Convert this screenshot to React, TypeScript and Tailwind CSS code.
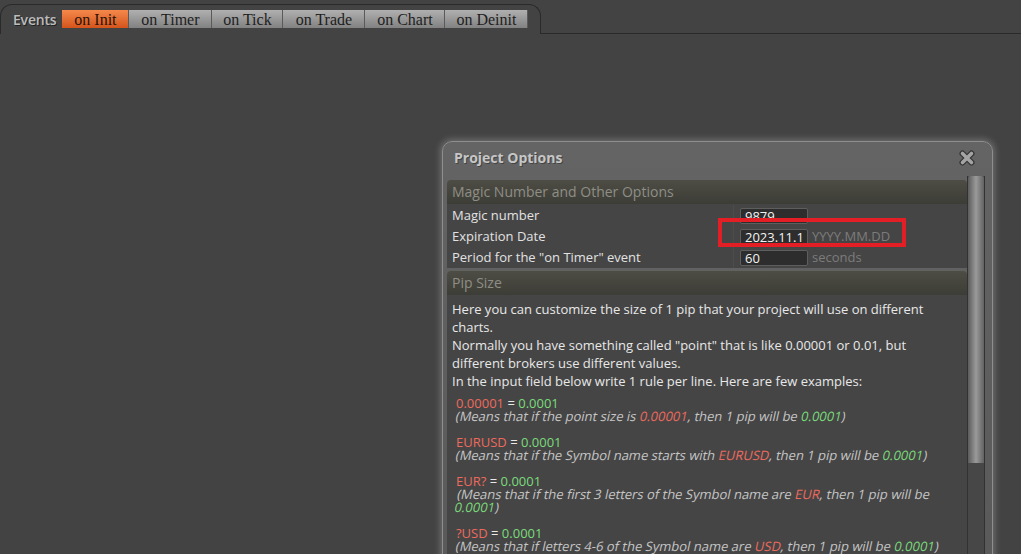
import React from "react";

const tabs = [
  { label: "on Init", w: "w-[67px]", active: true },
  { label: "on Timer", w: "w-[83px]" },
  { label: "on Tick", w: "w-[71px]" },
  { label: "on Trade", w: "w-[82px]" },
  { label: "on Chart", w: "w-[80px]" },
  { label: "on Deinit", w: "w-[83px]" },
];

function CloseIcon() {
  return (
    <svg width="18" height="18" viewBox="0 0 18 18">
      <path d="M4.5 4.5 L13.5 13.5 M13.5 4.5 L4.5 13.5" stroke="#333" strokeWidth="6" strokeLinecap="round" />
      <path d="M4.5 4.5 L13.5 13.5 M13.5 4.5 L4.5 13.5" stroke="#a4a4a4" strokeWidth="3.6" strokeLinecap="round" />
    </svg>
  );
}

const R = ({ children }: { children: React.ReactNode }) => <span className="text-[#ee6a5e]">{children}</span>;
const G = ({ children }: { children: React.ReactNode }) => <span className="text-[#7bdc7b]">{children}</span>;

function Input({ value }: { value: string }) {
  return (
    <div className="w-[68px] h-[16px] bg-[#2d2d2d] border border-[#5e5e5e] rounded-[2px] text-[13px] leading-[14px] text-[#f2f2f2] pl-[4px] overflow-hidden whitespace-nowrap">
      {value}
    </div>
  );
}

function Note({ children }: { children: React.ReactNode }) {
  return <div className="text-[#c6c6c6] -skew-x-12 origin-left">{children}</div>;
}

export default function App() {
  return (
    <div className="relative w-[1021px] h-[554px] overflow-hidden bg-[#434343] font-['Open_Sans',sans-serif]">
      {/* Events tab bar */}
      <div className="flex pt-[4px]">
        <div className="w-[541px] h-[30px] border-t border-l border-r border-[#2a2a2a] rounded-t-[12px] flex items-start pl-[12px] pt-[5px]">
          <div className="h-[18px] flex items-center text-[14px] font-semibold text-[#bcbcbc] tracking-[-0.2px] [text-shadow:1px_1px_0_#222] mr-[6px]">
            Events
          </div>
          <div className="flex">
            {tabs.map((t) => (
              <div
                key={t.label}
                className={`${t.w} h-[18px] flex items-center justify-center pt-[2px] text-[16px] leading-[16px] font-['Liberation_Serif',serif] border-r border-[#5a5a5a] ${
                  t.active
                    ? "bg-gradient-to-b from-[#f5884a] to-[#d4541a] text-[#2a1206]"
                    : "bg-gradient-to-b from-[#b0b0b0] to-[#828282] text-[#1e1e1e]"
                }`}
              >
                {t.label}
              </div>
            ))}
          </div>
        </div>
        <div className="flex-1 h-[30px] border-b border-[#2a2a2a]" />
      </div>

      {/* Dialog */}
      <div className="absolute left-[442px] top-[141px] w-[551px] h-[440px] rounded-[10px] border border-[#8e8e8e] bg-gradient-to-b from-[#646464] to-[#595959] shadow-[0_0_6px_2px_rgba(190,190,190,0.35)]">
        <div className="h-[34px] flex items-center justify-between pl-[11px] pr-[16px] pb-[3px]">
          <div className="text-[14px] font-bold text-[#c6c6c6] [text-shadow:1px_1px_0_#444]">Project Options</div>
          <CloseIcon />
        </div>
        <div className="flex pl-[4px]">
          <div className="w-[520px] pt-[4px]">
            {/* Section 1 */}
            <div className="h-[24px] rounded-t-[4px] bg-gradient-to-b from-[#4d4d45] to-[#3d3d37] flex items-center pl-[5px] pb-[1px] text-[14px] text-[#8e8e86]">
              Magic Number and Other Options
            </div>
            <div className="bg-[#454545] pt-[1px]">
              {[
                { l: "Magic number", v: "9879", s: "" },
                { l: "Expiration Date", v: "2023.11.1", s: "YYYY.MM.DD" },
                { l: "Period for the \"on Timer\" event", v: "60", s: "seconds" },
              ].map((r) => (
                <div key={r.l} className="h-[21px] flex">
                  <div className="w-[286px] pl-[5px] flex items-center text-[13px] text-[#e2e2e2]">{r.l}</div>
                  <div className="flex-1 border-l border-[#4c4c4c] pl-[6px] flex items-center gap-[4px]">
                    <Input value={r.v} />
                    <span className="text-[13px] text-[#7c7c7c]">{r.s}</span>
                  </div>
                </div>
              ))}
            </div>

            {/* Section 2 */}
            <div className="mt-[3px] h-[24px] rounded-t-[4px] bg-gradient-to-b from-[#4d4d45] to-[#3d3d37] flex items-center pl-[5px] pb-[1px] text-[14px] text-[#8e8e86]">
              Pip Size
            </div>
            <div className="bg-[#454545] pl-[5px] pr-[15px] pt-[5px] pb-[20px] text-[13px] text-[#e8e8e8]">
              <div className="leading-[18px]">
                Here you can customize the size of 1 pip that your project will use on different charts.
                <br />
                Normally you have something called "point" that is like 0.00001 or 0.01, but different brokers use different values.
                <br />
                In the input field below write 1 rule per line. Here are few examples:
              </div>
              <div className="mt-[7px] pl-[4px] leading-[13px] flex flex-col gap-[13px]">
                <div>
                  <div><R>0.00001</R> = <G>0.0001</G></div>
                  <Note>(Means that if the point size is <R>0.00001</R>, then 1 pip will be <G>0.0001</G>)</Note>
                </div>
                <div>
                  <div><R>EURUSD</R> = <G>0.0001</G></div>
                  <Note>(Means that if the Symbol name starts with <R>EURUSD</R>, then 1 pip will be <G>0.0001</G>)</Note>
                </div>
                <div>
                  <div><R>EUR?</R> = <G>0.0001</G></div>
                  <Note>(Means that if the first 3 letters of the Symbol name are <R>EUR</R>, then 1 pip will be <G>0.0001</G>)</Note>
                </div>
                <div>
                  <div><R>?USD</R> = <G>0.0001</G></div>
                  <Note>(Means that if letters 4-6 of the Symbol name are <R>USD</R>, then 1 pip will be <G>0.0001</G>)</Note>
                </div>
              </div>
            </div>
          </div>
          {/* Scrollbar */}
          <div className="w-[18px] h-[400px] bg-[#474747] border-l border-r border-[#323232] flex flex-col">
            <div className="h-[287px] rounded-t-[2px] bg-gradient-to-r from-[#5c5c5c] via-[#9a9a9a] to-[#626262]" />
          </div>
        </div>
      </div>

      {/* Red annotation box */}
      <div className="absolute left-[718px] top-[218px] w-[188px] h-[29px] border-[4px] border-[#e31e24]" />
    </div>
  );
}
